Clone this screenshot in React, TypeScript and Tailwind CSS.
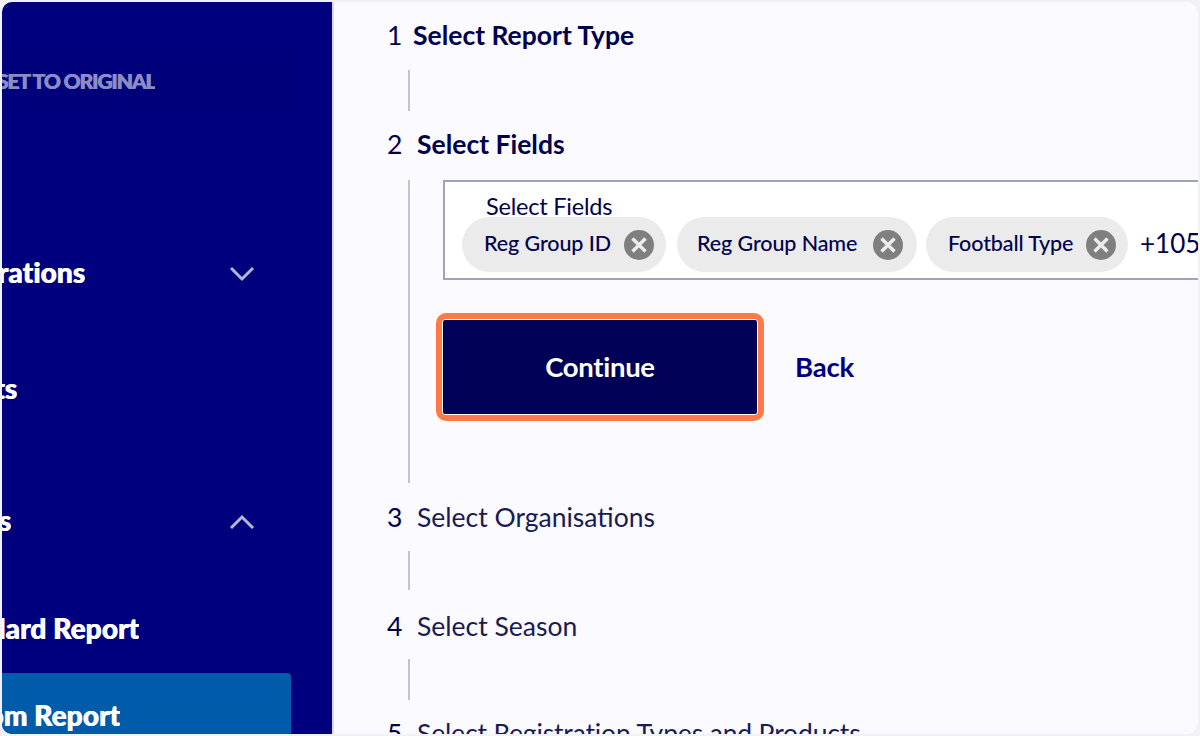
import React from "react";

const font = { fontFamily: "Lato, sans-serif" };

function Chevron({ up }: { up?: boolean }) {
  return (
    <svg width="26" height="16" viewBox="0 0 26 16" fill="none" className="mt-[1px] text-[#b4b4d6]">
      <path d={up ? "M2 14 L13 3 L24 14" : "M2 2 L13 13 L24 2"} stroke="currentColor" strokeWidth="3" />
    </svg>
  );
}

function Chip({ label, width, gap, inner }: { label: string; width: string; gap: string; inner: string }) {
  return (
    <div className={`flex h-[55px] shrink-0 items-center justify-between rounded-[28px] bg-[#ebebeb] ${inner} ${width} ${gap}`}>
      <span className="-mt-[2px] whitespace-nowrap text-[21.5px] font-medium tracking-[-0.1px] text-[#00004d]">{label}</span>
      <svg width="30" height="30" viewBox="0 0 30 30" className="shrink-0">
        <circle cx="15" cy="15" r="15" fill="#7f7f7f" />
        <path d="M8.5 8.5 L21.5 21.5 M21.5 8.5 L8.5 21.5" stroke="#ececec" strokeWidth="3.5" />
      </svg>
    </div>
  );
}

function StepTitle({ n, title, bold, gap, tight }: { n: string; title: string; bold?: boolean; gap: string; tight?: boolean }) {
  return (
    <div className="flex h-[30px] items-center pt-[2px] text-[26.5px] leading-[30px] text-[#00004d]">
      <span className={`font-normal ${gap}`}>{n}</span>
      <span className={`whitespace-nowrap ${tight ? "tracking-[-0.15px]" : ""} ${bold ? "font-bold" : "font-normal text-[#1a1a55]"}`}>{title}</span>
    </div>
  );
}

const navText =
  "overflow-hidden whitespace-nowrap pb-[2px] text-[28px] font-black tracking-[0.1px] text-white [text-shadow:0.8px_0_0_currentColor]";

export default function App() {
  return (
    <div style={font} className="flex h-[736px] w-[1200px] overflow-hidden bg-[#f1f2f5] p-[2px]">
      <aside className="flex h-[732px] w-[330px] shrink-0 flex-col overflow-hidden rounded-l-[10px] bg-[#00007f]">
        <div className="mt-[43px] flex h-[70px] w-[289px] shrink-0 items-center rounded-r-[4px] bg-[#00007a] pt-[2px]">
          <div className="flex w-[153px] justify-end overflow-hidden whitespace-nowrap text-[21px] font-black tracking-[-1.1px] text-[#8c8cc4] [text-shadow:0.8px_0_0_currentColor]">
            RESET TO ORIGINAL
          </div>
        </div>
        <div className="mt-[128px] flex h-[60px] w-[289px] shrink-0 items-center justify-between pr-[36px]">
          <div className={`flex w-[83px] justify-end ${navText}`}>Registrations</div>
          <Chevron />
        </div>
        <div className={`mt-[56px] flex h-[60px] w-[15px] shrink-0 items-center justify-end ${navText}`}>Products</div>
        <div className="mt-[72px] flex h-[60px] w-[289px] shrink-0 items-center justify-between pr-[36px]">
          <div className={`flex w-[9px] justify-end ${navText}`}>Reports</div>
          <Chevron up />
        </div>
        <div className={`mt-[48px] flex h-[60px] w-[137px] shrink-0 items-center justify-end ${navText}`}>Standard Report</div>
        <div className="mt-[14px] flex h-[61px] w-[289px] shrink-0 items-end rounded-tr-[4px] rounded-bl-[10px] bg-[#005bab]">
          <div className={`flex h-[36px] w-[118px] items-center justify-end ${navText}`}>Custom Report</div>
        </div>
      </aside>

      <main className="h-[732px] min-w-0 flex-1 overflow-hidden rounded-r-[12px] border-l-2 border-[#d9d9ea] bg-[#fafaff] pl-[53px] pt-[17px]">
        <StepTitle n="1" title="Select Report Type" bold gap="w-[26px]" />
        <div className="ml-[21px] mt-[21px] h-[41px] w-[2px] bg-[#c4c4c4]" />
        <div className="mt-[17px]">
          <StepTitle n="2" title="Select Fields" bold gap="w-[30px]" />
        </div>
        <div className="ml-[21px] mt-[22px] flex h-[303px] border-l-2 border-[#c4c4c4]">
          <div className="min-w-0 flex-1">
            <div className="ml-[33px] h-[100px] overflow-hidden border-2 border-r-0 border-[#a0a4bb] bg-white pl-[17px] pt-[12px]">
              <div className="pl-[24px] text-[23.5px] leading-[25px] tracking-[-0.2px] text-[#00004d]">Select Fields</div>
              <div className="-mt-[2px] flex items-center">
                <Chip label="Reg Group ID" width="w-[204px]" gap="mr-[11px]" inner="pl-[22px] pr-[12px]" />
                <Chip label="Reg Group Name" width="w-[240px]" gap="mr-[9px]" inner="pl-[20px] pr-[14px]" />
                <Chip label="Football Type" width="w-[202px]" gap="mr-[13px]" inner="pl-[22px] pr-[12px]" />
                <span className="-mt-[2px] -ml-[1px] whitespace-nowrap text-[26px] text-[#00004d]">+105 more</span>
              </div>
            </div>
            <div className="ml-[26px] mt-[33px] flex items-center">
              <div className="rounded-[10px] border-[6px] border-[#ff7a45] p-px">
                <button className="flex h-[94px] w-[314px] items-center justify-center rounded-[2px] bg-[#000057] text-[27.5px] font-bold tracking-[-0.3px] text-white">
                  Continue
                </button>
              </div>
              <span className="ml-[31px] text-[27.5px] font-bold tracking-[-0.2px] text-[#00007f]">Back</span>
            </div>
          </div>
        </div>
        <div className="mt-[18px]">
          <StepTitle n="3" title="Select Organisations" gap="w-[30px]" />
        </div>
        <div className="ml-[21px] mt-[20px] h-[39px] w-[2px] bg-[#c4c4c4]" />
        <div className="mt-[20px]">
          <StepTitle n="4" title="Select Season" gap="w-[30px]" />
        </div>
        <div className="ml-[21px] mt-[19px] h-[41px] w-[2px] bg-[#c4c4c4]" />
        <div className="mt-[17px]">
          <StepTitle n="5" title="Select Registration Types and Products" gap="w-[30px]" tight />
        </div>
      </main>
    </div>
  );
}
